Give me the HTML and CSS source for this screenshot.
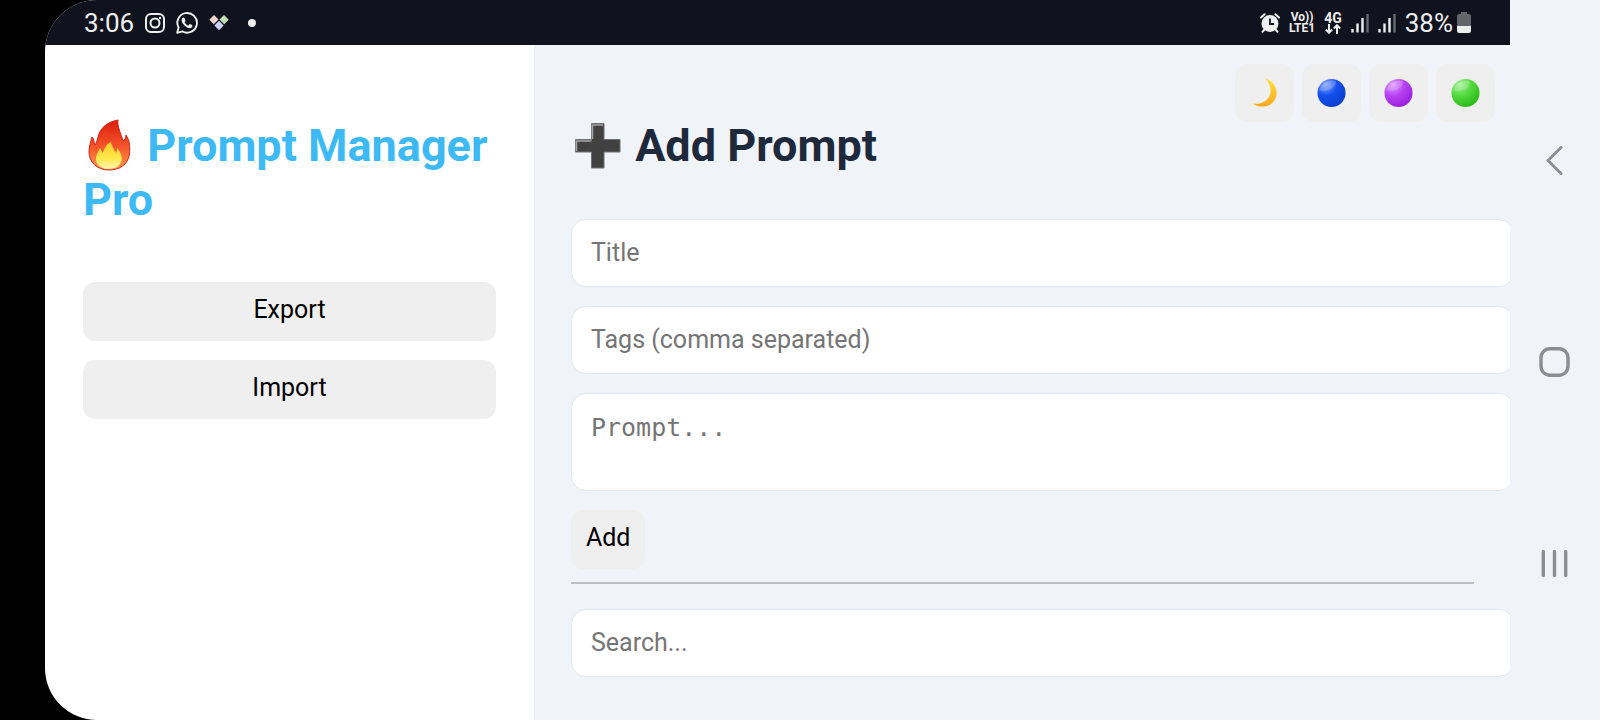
FILE: index.html
```html
<!DOCTYPE html>
<html lang="en">
<head>
  <meta charset="UTF-8">
  <meta name="viewport" content="width=device-width, initial-scale=1.0">
  <title>Prompt Manager Pro</title>
  <link rel="stylesheet" href="styles.css">
</head>
<body>

<div class="device">
  <div class="screen">

    <!-- Status bar -->
    <header class="status">
      <div class="status-group">
        <span class="status-text">3:06</span>
        <svg width="20" height="20" viewBox="0 0 20 20" fill="none" stroke="#eee" stroke-width="2">
          <rect x="1" y="1" width="18" height="18" rx="5"/>
          <circle cx="10" cy="10" r="4.5"/>
          <circle cx="15" cy="5" r="1.2" fill="#eee" stroke="none"/>
        </svg>
        <svg width="22" height="22" viewBox="0 0 22 22">
          <path d="M1.2 20.8 2.6 15.6A9.8 9.8 0 1 1 6.4 19.4Z" fill="none" stroke="#eee" stroke-width="1.9" stroke-linejoin="round"/>
          <path d="M7.6 5.6c-.8 0-2 1-2 2.7 0 3.600 5 7.900 8.100 7.900 1.600 0 2.900-1.200 2.800-2.500 0-.5-2.300-1.700-2.700-1.600-.5 0-1 1.400-1.500 1.400-.9 0-3.700-2.500-3.700-3.300 0-.4.9-.9.9-1.400 0-.5-.9-2.900-1.200-3.100z" fill="#eee"/>
        </svg>
        <svg width="20" height="16" viewBox="0 0 20 16">
          <path d="M5 0 9.500 4.500 4.800 9.200 0.300 4.700Z" fill="#f3d3cf"/>
          <path d="M15 0 19.700 4.700 15.200 9.200 10.500 4.500Z" fill="#bfe0b4"/>
          <path d="M10 5.800 14.600 10.400 10 15.200 5.400 10.400Z" fill="#ccd2fb"/>
        </svg>
        <svg class="more-dot" width="8" height="8" viewBox="0 0 8 8"><circle cx="4" cy="4" r="4" fill="#eee"/></svg>
      </div>

      <div class="status-group status-right">
        <svg width="20" height="20" viewBox="0 0 20 20">
          <circle cx="10" cy="10.500" r="8.500" fill="#eee"/>
          <path d="M1 4.600 4.600 1.200M19 4.600 15.400 1.200M4.500 16.500 2.500 18.800M15.500 16.500 17.500 18.800" stroke="#eee" stroke-width="2" stroke-linecap="round"/>
          <path d="M10 5.500V11H14" fill="none" stroke="#10131d" stroke-width="1.800"/>
        </svg>
        <span class="net"><span>Vo))</span><span>LTE1</span></span>
        <span class="net net-4g">
          <span>4G</span>
          <svg width="16" height="10" viewBox="0 0 16 10" fill="none" stroke="#eee" stroke-width="2">
            <path d="M4 0V9M.8 5.500 4 8.700 7.200 5.500M12 10V1M8.800 4.500 12 1.300 15.200 4.500"/>
          </svg>
        </span>
        <svg width="18" height="20" viewBox="0 0 18 20">
          <path d="M1.500 16V19.500M6.500 10.500V19.500M11.500 5V19.500" stroke="#eee" stroke-width="2.400"/>
          <path d="M16.500 1V19.500" stroke="#666a72" stroke-width="2.400"/>
        </svg>
        <svg width="18" height="20" viewBox="0 0 18 20">
          <path d="M1.500 16V19.500M6.500 10.500V19.500M11.500 5V19.500" stroke="#eee" stroke-width="2.400"/>
          <path d="M16.500 1V19.500" stroke="#666a72" stroke-width="2.400"/>
        </svg>
        <span class="battery">
          <span class="status-text">38%</span>
          <svg width="14" height="21" viewBox="0 0 14 21">
            <path d="M4 0H10V2H12Q14 2 14 4V14H0V4Q0 2 2 2H4Z" fill="#63656b"/>
            <path d="M0 14H14V18.500Q14 21 11.500 21H2.500Q0 21 0 18.500Z" fill="#eee"/>
          </svg>
        </span>
      </div>
    </header>

    <div class="app">
      <aside class="sidebar">
        <h2>
          <svg class="emoji-lg" viewBox="0 0 53 52">
            <defs>
              <linearGradient id="fire" x1="0" y1="0" x2="0" y2="1">
                <stop offset="0" stop-color="#d91c0b"/>
                <stop offset=".5" stop-color="#f4512a"/>
                <stop offset="1" stop-color="#ff9c4a"/>
              </linearGradient>
              <linearGradient id="flame" x1="0" y1="0" x2="0" y2="1">
                <stop offset="0" stop-color="#ffc928"/>
                <stop offset=".6" stop-color="#ffe84a"/>
                <stop offset="1" stop-color="#fff6b0"/>
              </linearGradient>
            </defs>
            <path d="M35 1C34 8 38 14 40 22 42 21 43 19 43 16 47 22 47 28 46.500 35 45 46 36 51 26 51 14 51 6 43 6 33 6 27 8 22 9 18 11 20 11 23 12 26 15 22 14 17 18 11 22 5 29 2 35 1Z" fill="url(#fire)" stroke="#cf2414"/>
            <path d="M34 5C27 7 18 14 17 25 16 29 14 31 11 31 13 27 18 25 20 18 22 12 27 7 34 5Z" fill="#fa4a16" opacity=".7"/>
            <path d="M28 23C29 28 31 30 33 34 34 32 34 31 34 29 38 34 40 38 38 43 36 48 31 50 25 50 17 50 12 44 13 38 14 34 16 32 17 29 18 30 19 32 19 34 22 31 22 25 28 23Z" fill="url(#flame)"/>
          </svg>
          Prompt Manager Pro
        </h2>
        <button type="button">Export</button>
        <button type="button">Import</button>
      </aside>

      <main class="main">
        <div class="themes">
          <button type="button" aria-label="Dark theme">
            <svg class="emoji" viewBox="0 0 30 30">
              <defs>
                <linearGradient id="moon" x1="0" y1="0" x2="0" y2="1">
                  <stop offset="0" stop-color="#ffe03a"/>
                  <stop offset="1" stop-color="#f9a91e"/>
                </linearGradient>
              </defs>
              <path d="M16 0C25 3 29 11 27 19 24 29 12 32 3 26 12 27 19 23 21 16 22 10 20 4 16 0Z" fill="url(#moon)"/>
            </svg>
          </button>
          <button type="button" aria-label="Blue theme">
            <svg class="emoji" viewBox="0 0 30 30">
              <defs>
                <radialGradient id="blue" cx=".3" cy=".2" r=".8">
                  <stop offset="0" stop-color="#8aa8ff"/>
                  <stop offset=".5" stop-color="#1450ee"/>
                  <stop offset="1" stop-color="#0a40d0"/>
                </radialGradient>
              </defs>
              <circle cx="15" cy="15" r="14.500" fill="url(#blue)"/>
              <path d="M2 12C5 4 13 1 20 3 19 10 10 15 2 12Z" fill="#fff" opacity=".18"/>
            </svg>
          </button>
          <button type="button" aria-label="Purple theme">
            <svg class="emoji" viewBox="0 0 30 30">
              <defs>
                <radialGradient id="purple" cx=".3" cy=".2" r=".8">
                  <stop offset="0" stop-color="#dc9cff"/>
                  <stop offset=".5" stop-color="#b844f4"/>
                  <stop offset="1" stop-color="#9c22e0"/>
                </radialGradient>
              </defs>
              <circle cx="15" cy="15" r="14.500" fill="url(#purple)"/>
              <path d="M2 12C5 4 13 1 20 3 19 10 10 15 2 12Z" fill="#fff" opacity=".18"/>
            </svg>
          </button>
          <button type="button" aria-label="Green theme">
            <svg class="emoji" viewBox="0 0 30 30">
              <defs>
                <radialGradient id="green" cx=".3" cy=".2" r=".8">
                  <stop offset="0" stop-color="#a8f09a"/>
                  <stop offset=".5" stop-color="#55da40"/>
                  <stop offset="1" stop-color="#2fbc1a"/>
                </radialGradient>
              </defs>
              <circle cx="15" cy="15" r="14.500" fill="url(#green)"/>
              <path d="M2 12C5 4 13 1 20 3 19 10 10 15 2 12Z" fill="#fff" opacity=".18"/>
            </svg>
          </button>
        </div>

        <h2>
          <svg class="emoji-lg" viewBox="0 0 53 52">
            <path d="M20.500 4.500H33V20.500H49V33H33V49H20.500V33H4.500V20.500H20.500Z" fill="#414141" stroke="#6f7072"/>
            <path d="M21.500 20V6H32M5.500 32V22H20.500" fill="none" stroke="#a5a6a8" stroke-width="1.500"/>
          </svg>
          Add Prompt
        </h2>

        <form class="prompt-form">
          <input type="text" placeholder="Title" aria-label="Title">
          <input type="text" placeholder="Tags (comma separated)" aria-label="Tags">
          <textarea placeholder="Prompt..." aria-label="Prompt"></textarea>
          <button type="button">Add</button>
        </form>

        <hr>

        <input type="search" placeholder="Search..." aria-label="Search">
      </main>
    </div>
  </div>

  <!-- System navigation -->
  <nav class="sysnav" aria-label="System">
    <button type="button" aria-label="Back">
      <svg width="32" height="30" viewBox="0 0 32 30" fill="none" stroke="#8b8d90" stroke-width="3" stroke-linecap="round" stroke-linejoin="round">
        <path d="M22 2.500 9 15.500 22 28.500"/>
      </svg>
    </button>
    <button type="button" aria-label="Home">
      <svg width="32" height="30" viewBox="0 0 32 30" fill="none" stroke="#8b8d90" stroke-width="3.400">
        <rect x="2" y="1.700" width="27" height="26.600" rx="9"/>
      </svg>
    </button>
    <button type="button" aria-label="Recent apps">
      <svg width="32" height="30" viewBox="0 0 32 30" stroke="#8b8d90" stroke-width="3.400" stroke-linecap="round">
        <path d="M4.300 2.500V26.500M15.500 2.500V26.500M26.700 2.500V26.500"/>
      </svg>
    </button>
  </nav>
</div>

</body>
</html>
```
FILE: styles.css
```css
body {
  margin: 0;
  background: #000;
  color: #1e293b;
  font-family: Roboto, sans-serif;
}

.device {
  display: flex;
  min-height: 100vh;
  padding-left: 45px;
}

.screen {
  flex: 1;
  min-width: 0;
  display: flex;
  flex-direction: column;
  background: #fff;
  border-radius: 52px 0 0 52px;
  overflow: hidden;
}

/* Status bar */
.status {
  display: flex;
  justify-content: space-between;
  align-items: center;
  height: 45px;
  padding: 0 39px;
  background: #10131d;
  color: #eee;
}

.status-group {
  display: flex;
  align-items: center;
  gap: 11px;
}

.status-right {
  gap: 9px;
}

.status-text {
  font-size: 26px;
  line-height: 30px;
}

.more-dot {
  margin-left: 8px;
}

.net {
  display: flex;
  flex-direction: column;
  align-items: center;
  font-size: 12px;
  font-weight: bold;
  line-height: 11px;
}

.net-4g {
  font-size: 14px;
  line-height: 12px;
}

.battery {
  display: flex;
  align-items: center;
  gap: 4px;
}

/* App */
.app {
  flex: 1;
  display: grid;
  grid-template-columns: minmax(0, 1fr) minmax(0, 1.99fr);
}

.sidebar {
  display: flex;
  flex-direction: column;
  gap: 19px;
  padding: 38px;
  border-right: 1px solid #e8edf3;
}

.main {
  position: relative;
  padding: 38px 36px;
  background: #f0f4f9;
}

h2 {
  margin: 36px 0 46px;
  font-size: 45px;
  line-height: 54px;
}

.sidebar h2 {
  margin-bottom: 36px;
  color: #3dbaf5;
}

.emoji-lg {
  width: 53px;
  height: 52px;
  vertical-align: -10px;
}

button {
  padding: 13px 15px 16px;
  border: none;
  border-radius: 12px;
  background: #efefef;
  color: #000;
  font-family: inherit;
  font-size: 25px;
  line-height: 30px;
  cursor: pointer;
}

.themes {
  position: absolute;
  top: 19px;
  right: 15px;
  display: flex;
  gap: 8px;
}

.themes button {
  padding: 14px 15px;
}

.emoji {
  display: block;
  width: 29px;
  height: 30px;
}

.prompt-form {
  display: flex;
  flex-direction: column;
  align-items: flex-start;
  gap: 19px;
}

input,
textarea {
  box-sizing: content-box;
  width: 100%;
  height: 28px;
  padding: 18px 19px 20px;
  border: 1px solid #e2e8f0;
  border-radius: 15px;
  background: #fff;
  font-family: inherit;
  font-size: 25px;
}

textarea {
  height: 58px;
  padding: 19px;
  font-family: "DejaVu Sans Mono", monospace;
  resize: none;
}

input::placeholder,
textarea::placeholder {
  color: #757575;
}

hr {
  margin: 13px 0 25px;
  border: none;
  border-top: 2px solid #bcc1c6;
}

/* System navigation */
.sysnav {
  display: flex;
  flex-direction: column;
  justify-content: space-between;
  align-items: center;
  width: 90px;
  padding: 145px 0 141px;
  box-sizing: border-box;
  background: #f0f4f9;
}

.sysnav button {
  padding: 0;
  background: none;
}

.sysnav svg {
  display: block;
}
```
